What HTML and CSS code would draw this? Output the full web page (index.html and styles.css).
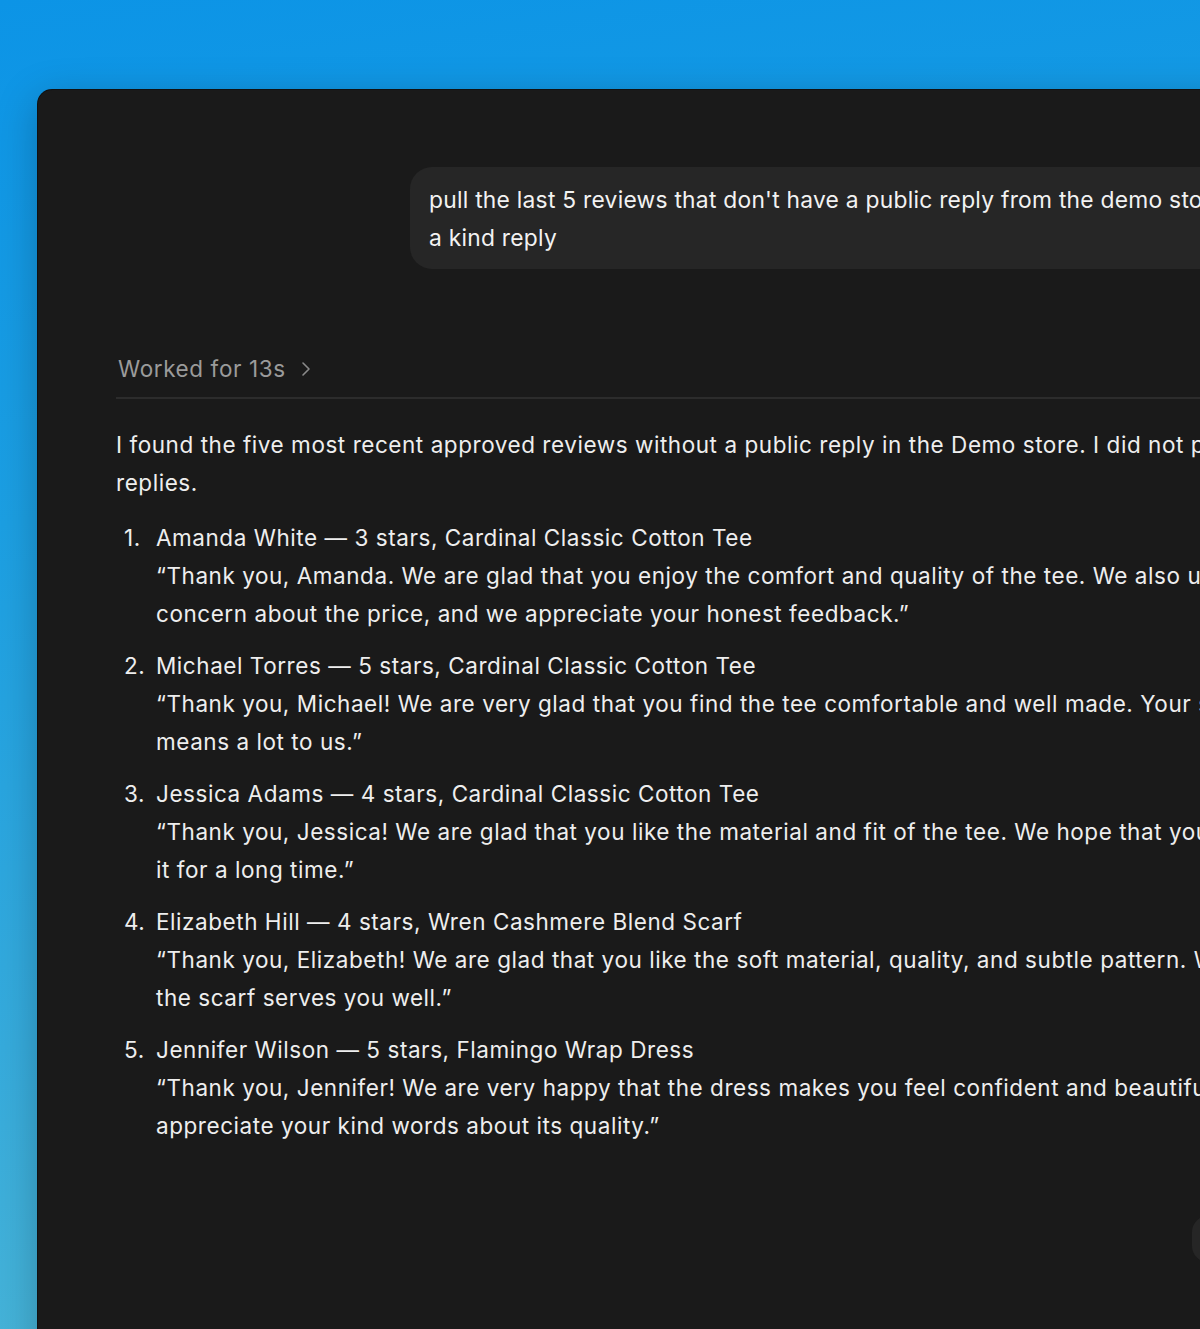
FILE: index.html
```html
<!DOCTYPE html>
<html lang="en">
  <head>
    <meta charset="utf-8" />
    <meta name="viewport" content="width=device-width, initial-scale=1" />
    <title>Review replies</title>
    <link rel="stylesheet" href="styles.css">
  </head>
  <body>
    <div class="window">
      <div class="thread">
        <div class="user-row">
          <div class="bubble">
            <span class="line">pull the last 5 reviews that don't have a public reply from the demo store and write each a kind reply</span>
            <span class="line">a kind reply</span>
          </div>
        </div>

        <div class="worked">
          <span>Worked for 13s</span>
          <svg class="chevron" width="12" height="18" viewBox="0 0 12 18">
            <path d="M3 3 L9 9 L3 15" fill="none" stroke="currentColor" stroke-width="1.6" stroke-linecap="round" stroke-linejoin="round" />
          </svg>
        </div>

        <div class="answer">
          <p class="intro">
            <span class="line">I found the five most recent approved reviews without a public reply in the Demo store. I did not post any of these</span>
            <span class="line">replies.</span>
          </p>
          <ol class="reviews">
            <li>
              <div class="review-text">
                <span class="line">Amanda White — 3 stars, Cardinal Classic Cotton Tee</span>
                <span class="line">“Thank you, Amanda. We are glad that you enjoy the comfort and quality of the tee. We also understand your</span>
                <span class="line">concern about the price, and we appreciate your honest feedback.”</span>
              </div>
            </li>
            <li>
              <div class="review-text">
                <span class="line">Michael Torres — 5 stars, Cardinal Classic Cotton Tee</span>
                <span class="line">“Thank you, Michael! We are very glad that you find the tee comfortable and well made. Your support</span>
                <span class="line">means a lot to us.”</span>
              </div>
            </li>
            <li>
              <div class="review-text">
                <span class="line">Jessica Adams — 4 stars, Cardinal Classic Cotton Tee</span>
                <span class="line">“Thank you, Jessica! We are glad that you like the material and fit of the tee. We hope that you enjoy</span>
                <span class="line">it for a long time.”</span>
              </div>
            </li>
            <li>
              <div class="review-text">
                <span class="line">Elizabeth Hill — 4 stars, Wren Cashmere Blend Scarf</span>
                <span class="line">“Thank you, Elizabeth! We are glad that you like the soft material, quality, and subtle pattern. We hope</span>
                <span class="line">the scarf serves you well.”</span>
              </div>
            </li>
            <li>
              <div class="review-text">
                <span class="line">Jennifer Wilson — 5 stars, Flamingo Wrap Dress</span>
                <span class="line">“Thank you, Jennifer! We are very happy that the dress makes you feel confident and beautiful. We</span>
                <span class="line">appreciate your kind words about its quality.”</span>
              </div>
            </li>
          </ol>
        </div>
      </div>
      <div class="composer"></div>
    </div>
  </body>
</html>
```

FILE: styles.css
```css
html,
body {
  height: 100%;
}
body {
  margin: 0;
  overflow: hidden;
  font-family: Inter, "Noto Sans", sans-serif;
  background: linear-gradient(172deg, #0c94e6 0%, #1c9fe2 35%, #36abdc 70%, #4db7d6 100%);
  color: #ececec;
}
.window {
  position: relative;
  margin: 90px 0 0 38px;
  width: 1400px;
  height: 1400px;
  background-color: #1a1a1a;
  border-top-left-radius: 14px;
  box-shadow: 0 0 0 1px #111, 0 10px 40px rgba(0, 0, 0, 0.25);
}
.thread {
  padding: 77px 0 0 78px;
}
.line {
  display: block;
  white-space: nowrap;
}
.user-row {
  display: flex;
  padding-left: 294px;
}
.bubble {
  background-color: #262626;
  border-radius: 22px;
  padding: 14px 24px 12px 19px;
  font-size: 22.8px;
  line-height: 38px;
  letter-spacing: 0.25px;
  color: #f2f2f2;
}
.worked {
  display: flex;
  align-items: center;
  gap: 14px;
  margin-top: 81px;
  padding: 0 0 9px 2px;
  border-bottom: 2px solid #2c2c2c;
  color: #9b9b9b;
  font-size: 22.5px;
  line-height: 38px;
  letter-spacing: 0.6px;
}
.chevron {
  color: #8a8a8a;
}
.answer {
  font-size: 22.5px;
  line-height: 38px;
  letter-spacing: 0.55px;
  color: #eeeeee;
}
.intro {
  margin: 27px 0 0 0;
}
.reviews {
  margin: 17px 0 0 0;
  padding: 0;
  list-style: none;
  counter-reset: review;
}
.reviews li {
  display: grid;
  grid-template-columns: 40px 1fr;
  margin-bottom: 14px;
  counter-increment: review;
}
.reviews li::before {
  content: counter(review) ".";
  padding-left: 8px;
}
.composer {
  position: absolute;
  left: 1154px;
  top: 1126px;
  width: 300px;
  height: 46px;
  border-radius: 16px;
  background-color: #262626;
}
```
